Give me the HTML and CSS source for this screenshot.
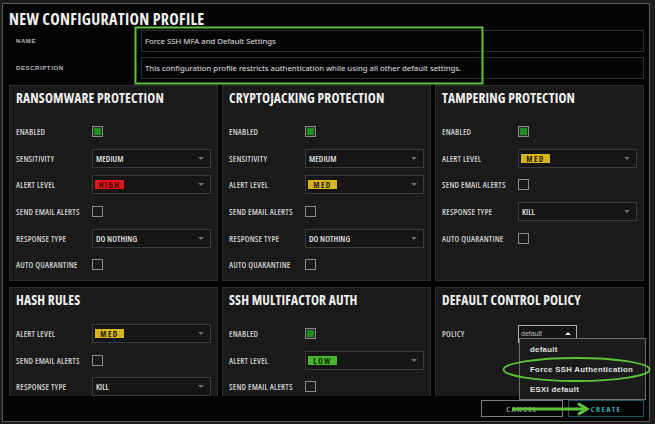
FILE: index.html
```html
<!DOCTYPE html>
<html lang="en">
<head>
<meta charset="utf-8">
<title>New Configuration Profile</title>
<link rel="stylesheet" href="styles.css">
</head>
<body>
<div class="modal">
  <h1 class="title">NEW CONFIGURATION PROFILE</h1>
  <div class="form">
    <span class="flabel">NAME</span>
    <div class="input">Force SSH MFA and Default Settings</div>
    <span class="flabel">DESCRIPTION</span>
    <div class="input">This configuration profile restricts authentication while using all other default settings.</div>
  </div>

  <div class="panels">
    <section class="panel">
      <h2>RANSOMWARE PROTECTION</h2>
      <div class="rows">
        <span class="lbl">ENABLED</span><span class="cb on"></span>
        <span class="lbl">SENSITIVITY</span><div class="sel"><span class="val">MEDIUM</span><span class="caret"></span></div>
        <span class="lbl">ALERT LEVEL</span><div class="sel"><span class="badge high">HIGH</span><span class="caret"></span></div>
        <span class="lbl">SEND EMAIL ALERTS</span><span class="cb"></span>
        <span class="lbl">RESPONSE TYPE</span><div class="sel"><span class="val">DO NOTHING</span><span class="caret"></span></div>
        <span class="lbl">AUTO QUARANTINE</span><span class="cb"></span>
      </div>
    </section>
    <section class="panel">
      <h2>CRYPTOJACKING PROTECTION</h2>
      <div class="rows">
        <span class="lbl">ENABLED</span><span class="cb on"></span>
        <span class="lbl">SENSITIVITY</span><div class="sel"><span class="val">MEDIUM</span><span class="caret"></span></div>
        <span class="lbl">ALERT LEVEL</span><div class="sel"><span class="badge med">MED</span><span class="caret"></span></div>
        <span class="lbl">SEND EMAIL ALERTS</span><span class="cb"></span>
        <span class="lbl">RESPONSE TYPE</span><div class="sel"><span class="val">DO NOTHING</span><span class="caret"></span></div>
        <span class="lbl">AUTO QUARANTINE</span><span class="cb"></span>
      </div>
    </section>
    <section class="panel">
      <h2>TAMPERING PROTECTION</h2>
      <div class="rows">
        <span class="lbl">ENABLED</span><span class="cb on"></span>
        <span class="lbl">ALERT LEVEL</span><div class="sel"><span class="badge med">MED</span><span class="caret"></span></div>
        <span class="lbl">SEND EMAIL ALERTS</span><span class="cb"></span>
        <span class="lbl">RESPONSE TYPE</span><div class="sel"><span class="val">KILL</span><span class="caret"></span></div>
        <span class="lbl">AUTO QUARANTINE</span><span class="cb"></span>
      </div>
    </section>
    <section class="panel">
      <h2>HASH RULES</h2>
      <div class="rows">
        <span class="lbl">ALERT LEVEL</span><div class="sel"><span class="badge med">MED</span><span class="caret"></span></div>
        <span class="lbl">SEND EMAIL ALERTS</span><span class="cb"></span>
        <span class="lbl">RESPONSE TYPE</span><div class="sel"><span class="val">KILL</span><span class="caret"></span></div>
      </div>
    </section>
    <section class="panel">
      <h2>SSH MULTIFACTOR AUTH</h2>
      <div class="rows">
        <span class="lbl">ENABLED</span><span class="cb on"></span>
        <span class="lbl">ALERT LEVEL</span><div class="sel"><span class="badge low">LOW</span><span class="caret"></span></div>
        <span class="lbl">SEND EMAIL ALERTS</span><span class="cb"></span>
      </div>
    </section>
    <section class="panel">
      <h2>DEFAULT CONTROL POLICY</h2>
      <div class="rows">
        <span class="lbl">POLICY</span><div class="psel"><span class="pval">default</span><span class="caret up"></span></div>
      </div>
    </section>
  </div>

  <div class="footer">
    <button class="btn cancel">CANCEL</button>
    <button class="btn create">CREATE</button>
  </div>

  <ul class="menu">
    <li>default</li>
    <li>Force SSH Authentication</li>
    <li>ESXI default</li>
  </ul>
</div>

<svg class="annot" width="655" height="424" viewBox="0 0 655 424" aria-hidden="true">
  <rect x="135.5" y="27.5" width="347" height="56" fill="none" stroke="#5cc23a" stroke-width="2"/>
  <ellipse cx="576.5" cy="369.5" rx="73" ry="11.5" fill="none" stroke="#5cc23a" stroke-width="2"/>
  <line x1="512" y1="409" x2="584" y2="409" stroke="#5cc23a" stroke-width="3"/>
  <polyline points="578,403.5 587,409 578,414.5" fill="none" stroke="#5cc23a" stroke-width="3" stroke-linejoin="miter"/>
</svg>
</body>
</html>
```

FILE: styles.css
```css
* { box-sizing: border-box; }

html, body {
  margin: 0;
  padding: 0;
  background: #1c1c1c;
  width: 655px;
  height: 424px;
  overflow: hidden;
}

body {
  font-family: "Open Sans", "DejaVu Sans Condensed", sans-serif;
  font-stretch: 75%;
  color: #d6d6d6;
}

.modal {
  position: relative;
  margin: 3px 0 0 2px;
  width: 648px;
  height: 419px;
  border: 1px solid #595959;
  background: #040404;
  padding: 6px 5px 0 6px;
  display: flex;
  flex-direction: column;
}

.title {
  margin: 0;
  font-size: 16px;
  line-height: 18px;
  font-weight: 700;
  letter-spacing: 0.3px;
  color: #f2f2f2;
  white-space: nowrap;
}

.form {
  margin-top: 2px;
  display: grid;
  grid-template-columns: 132px 1fr;
  grid-auto-rows: 22px;
  row-gap: 5px;
  align-items: center;
}

.flabel {
  padding-left: 7px;
  font-family: "Liberation Sans", "DejaVu Sans", sans-serif;
  font-stretch: normal;
  font-size: 6px;
  font-weight: 700;
  letter-spacing: 0.6px;
  color: #b9b9b9;
}

.input {
  height: 22px;
  border: 1px solid #2e2e2e;
  background: #050505;
  padding-left: 3px;
  display: flex;
  align-items: center;
  font-family: "Noto Sans", "Open Sans", sans-serif;
  font-stretch: normal;
  font-size: 7.8px;
  color: #e0e0e0;
  white-space: nowrap;
}

.panels {
  margin-top: 6px;
  height: 311px;
  overflow: hidden;
  display: grid;
  grid-template-columns: repeat(3, 1fr);
  grid-template-rows: 196px 196px;
  column-gap: 4px;
  row-gap: 6px;
}

.panel {
  background: #1a1a1a;
  border: 1px solid #2c2c2c;
  padding: 4.5px 6px 0 6px;
}

.panel h2 {
  margin: 0 0 14px 0;
  font-size: 13.5px;
  line-height: 14px;
  font-weight: 700;
  letter-spacing: 0.15px;
  color: #f0f0f0;
  white-space: nowrap;
}

.rows {
  display: grid;
  grid-template-columns: 76px 1fr;
  grid-auto-rows: 26.6px;
  align-items: center;
}

.lbl {
  font-size: 8.4px;
  font-weight: 600;
  letter-spacing: 0.2px;
  color: #cfcfcf;
  white-space: nowrap;
}

.cb {
  width: 11px;
  height: 11px;
  border: 1px solid #8a8a8a;
  background: transparent;
}

.cb.on {
  background: #1f8c1f;
  box-shadow: inset 0 0 0 1px #2a2a2a;
}

.sel {
  height: 19px;
  border: 1px solid #3a3a3a;
  background: #151515;
  display: flex;
  align-items: center;
  justify-content: space-between;
  padding: 0 6px 0 2px;
}

.val {
  font-size: 8.4px;
  font-weight: 600;
  letter-spacing: 0.1px;
  color: #e6e6e6;
  padding-left: 1px;
}

.caret {
  width: 0;
  height: 0;
  border-left: 3px solid transparent;
  border-right: 3px solid transparent;
  border-top: 3px solid #6c6c6c;
}

.caret.up {
  border-top: 0;
  border-bottom: 3px solid #f0f0f0;
}

.badge {
  width: 29px;
  height: 9px;
  display: flex;
  align-items: center;
  justify-content: center;
  font-size: 8px;
  font-weight: 700;
  letter-spacing: 1.4px;
  line-height: 9px;
  color: #222;
}

.badge.high { background: #e2151f; color: #3a0306; }
.badge.med { background: #d7b420; color: #262200; }
.badge.low { background: #49b52b; color: #0c2a06; }

.psel {
  width: 59px;
  height: 18px;
  border: 1px solid #b0b0b0;
  background: #141414;
  display: flex;
  align-items: center;
  justify-content: space-between;
  padding: 0 5px 0 2px;
}

.pval {
  font-family: "Liberation Sans", "DejaVu Sans", sans-serif;
  font-stretch: normal;
  font-size: 7px;
  color: #bdbdbd;
}

.footer {
  flex: 1;
  display: flex;
  justify-content: flex-end;
  align-items: flex-start;
  gap: 5px;
  padding-top: 4px;
}

.btn {
  height: 17px;
  background: transparent;
  font-family: "Open Sans", sans-serif;
  font-stretch: 75%;
  font-size: 7.8px;
  font-weight: 700;
  letter-spacing: 1.4px;
  padding: 0;
  display: flex;
  align-items: center;
  justify-content: center;
}

.cancel {
  width: 82px;
  border: 1px solid #7a7a7a;
  color: #8c8c8c;
}

.create {
  width: 76px;
  border: 1px solid #1d5561;
  color: #3aa3b5;
}

.menu {
  position: absolute;
  left: 516px;
  top: 334px;
  width: 127px;
  height: 62px;
  margin: 0;
  padding: 0;
  list-style: none;
  background: #1b1b1b;
  border: 1px solid #707070;
}

.menu li {
  height: 20px;
  display: flex;
  align-items: center;
  padding-left: 10px;
  font-family: "Liberation Sans", "DejaVu Sans", sans-serif;
  font-stretch: normal;
  font-size: 7.8px;
  font-weight: 700;
  letter-spacing: 0.3px;
  color: #e2e2e2;
}

.annot {
  position: absolute;
  left: 0;
  top: 0;
  pointer-events: none;
}
```
